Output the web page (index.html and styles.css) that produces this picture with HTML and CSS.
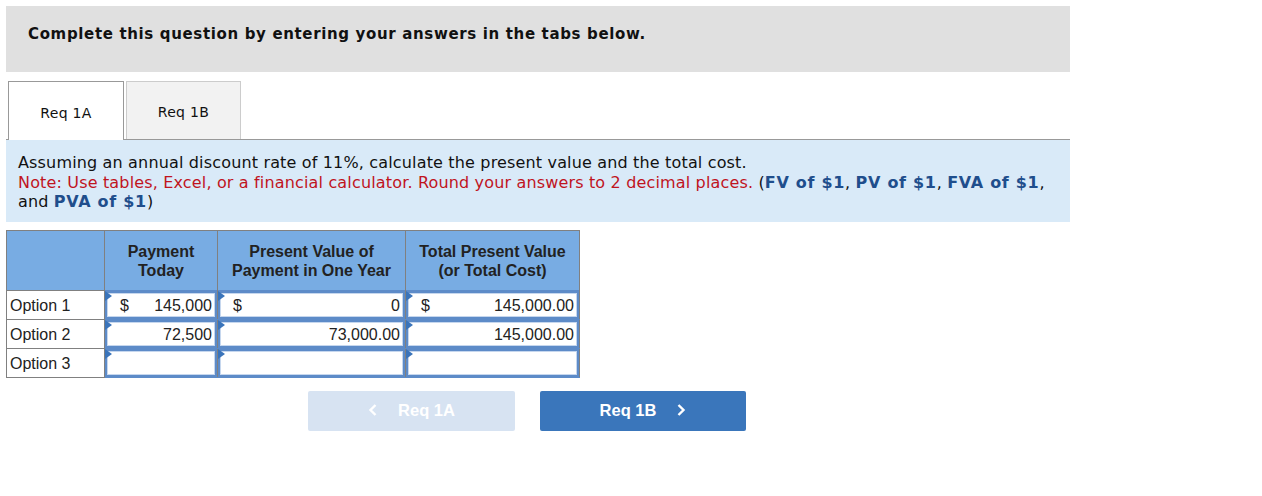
FILE: index.html
```html
<!DOCTYPE html>
<html>
<head>
<meta charset="utf-8">
<link rel="stylesheet" href="styles.css">
</head>
<body>
<div class="page">
  <div class="banner">Complete this question by entering your answers in the tabs below.</div>
  <div class="tabs">
    <div class="tab active">Req 1A</div>
    <div class="tab">Req 1B</div>
  </div>
  <div class="prompt">
    <p class="line">Assuming an annual discount rate of 11%, calculate the present value and the total cost.</p>
    <p class="line"><span class="note">Note: Use tables, Excel, or a financial calculator. Round your answers to 2 decimal places.</span> (<b class="ref">FV of $1</b>, <b class="ref">PV of $1</b>, <b class="ref">FVA of $1</b>,</p>
    <p class="line">and <b class="ref">PVA of $1</b>)</p>
  </div>
  <table class="grid">
    <colgroup>
      <col class="c1"><col class="c2"><col class="c3"><col class="c4">
    </colgroup>
    <thead>
      <tr>
        <th></th>
        <th>Payment<br>Today</th>
        <th>Present Value of<br>Payment in One Year</th>
        <th>Total Present Value<br>(or Total Cost)</th>
      </tr>
    </thead>
    <tbody>
      <tr>
        <td class="label">Option 1</td>
        <td class="in"><div class="box"><span class="cur">$</span><span class="val">145,000</span></div></td>
        <td class="in"><div class="box"><span class="cur">$</span><span class="val">0</span></div></td>
        <td class="in"><div class="box"><span class="cur">$</span><span class="val">145,000.00</span></div></td>
      </tr>
      <tr>
        <td class="label">Option 2</td>
        <td class="in"><div class="box"><span class="val">72,500</span></div></td>
        <td class="in"><div class="box"><span class="val">73,000.00</span></div></td>
        <td class="in"><div class="box"><span class="val">145,000.00</span></div></td>
      </tr>
      <tr>
        <td class="label">Option 3</td>
        <td class="in"><div class="box"></div></td>
        <td class="in"><div class="box"></div></td>
        <td class="in"><div class="box"></div></td>
      </tr>
    </tbody>
  </table>
  <div class="nav">
    <div class="btn prev">
      <svg width="10" height="14" viewBox="0 0 10 14"><path d="M7.5 2 L2.5 7 L7.5 12" fill="none" stroke="#fff" stroke-width="2.4"/></svg>
      <span>Req 1A</span>
    </div>
    <div class="btn next">
      <span>Req 1B</span>
      <svg width="10" height="14" viewBox="0 0 10 14"><path d="M2.5 2 L7.5 7 L2.5 12" fill="none" stroke="#fff" stroke-width="2.4"/></svg>
    </div>
  </div>
</div>
</body>
</html>
```

FILE: styles.css
```css
* { box-sizing: border-box; }
body { margin: 0; background: #fff; font-family: "DejaVu Sans", Verdana, sans-serif; color: #111; }
.page { padding: 6px; width: 1076px; }

.banner {
  height: 66px;
  background: #e0e0e0;
  padding: 19px 0 0 22px;
  font-weight: bold;
  font-size: 15px;
  letter-spacing: 0.65px;
  color: #111;
}

.tabs {
  display: flex;
  margin-top: 9px;
  border-bottom: 1px solid #999;
  height: 59px;
}
.tab {
  width: 116px;
  height: 58px;
  margin-right: 2px;
  display: flex;
  align-items: center;
  justify-content: center;
  font-size: 14px;
  letter-spacing: 0.3px;
  color: #111;
  padding-top: 3px;
}
.tab.active {
  margin-left: 2px;
  background: #fff;
  border: 1px solid #999;
  border-bottom: none;
  height: 59px;
  margin-bottom: -1px;
}
.tab:not(.active) {
  background: #f2f2f2;
  border: 1px solid #ccc;
  border-bottom: none;
  width: 115px;
}

.prompt {
  background: #d9eaf8;
  height: 82px;
  padding: 13px 12px 0 12px;
  font-size: 16px;
  line-height: 19.5px;
  letter-spacing: 0.16px;
  color: #111;
}
.line { margin: 0; white-space: nowrap; }
.note { color: #c0141e; }
.ref { color: #1f4e8c; letter-spacing: 0.7px; }

.grid {
  margin-top: 8px;
  border-collapse: collapse;
  font-family: "Liberation Sans", Arial, sans-serif;
  font-size: 16px;
  color: #222;
  border: 1px solid #808080;
}
.c1 { width: 98px; }
.c2 { width: 113px; }
.c3 { width: 188px; }
.c4 { width: 174px; }
.grid th {
  background: #78ace3;
  height: 60px;
  font-weight: bold;
  line-height: 19px;
  border-left: 1px solid #808080;
  border-right: 1px solid #808080;
  padding: 0;
  color: #222;
}
.grid td {
  height: 29px;
  padding: 1px 0 0;
  border: 1px solid #808080;
}
.grid td.label { padding-left: 3px; }
.grid td.in {
  background: #5d8bc8;
  padding: 2px;
  position: relative;
  border-top: 1px solid #5d8bc8;
  border-bottom: 1px solid #5d8bc8;
}
.grid td.in::before {
  content: "";
  position: absolute;
  left: 0;
  top: 0;
  border-top: 5px solid transparent;
  border-bottom: 5px solid transparent;
  border-left: 7px solid #3a74ba;
}
.box {
  background: #fff;
  border: 1px solid #c6d7ee;
  height: 24px;
  display: flex;
  align-items: center;
  padding: 1px 2px 0 12px;
}
.cur { flex: none; }
.val { margin-left: auto; }

.nav {
  display: flex;
  gap: 25px;
  margin: 13px 0 0 302px;
}
.btn {
  width: 207px;
  height: 40px;
  border-radius: 2px;
  display: flex;
  align-items: center;
  justify-content: center;
  gap: 18px;
  color: #fff;
  font-family: "Liberation Sans", Arial, sans-serif;
  font-weight: bold;
  font-size: 16.5px;
  padding-bottom: 2px;
}
.prev { background: #d7e3f2; gap: 20px; }
.next { background: #3a76bb; width: 206px; gap: 20px; }
```
